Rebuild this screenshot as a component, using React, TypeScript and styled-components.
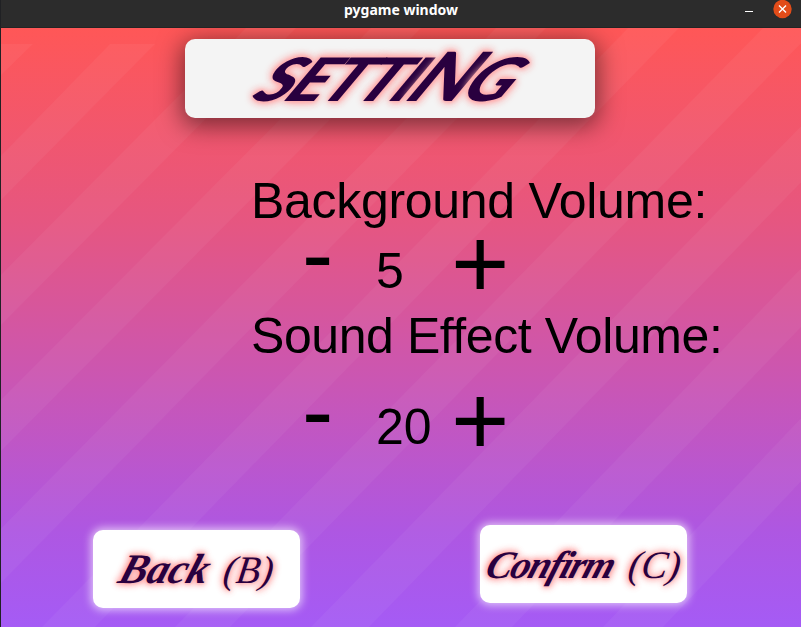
import React from 'react';
import styled, { createGlobalStyle } from 'styled-components';

const GlobalStyle = createGlobalStyle`
  * { box-sizing: border-box; }
  body { margin: 0; overflow: hidden; }
`;

const Window = styled.div`
  display: flex;
  flex-direction: column;
  width: 801px;
  height: 627px;
  overflow: hidden;
  border-left: 1px solid #202124;
`;

const TitleBar = styled.header`
  display: grid;
  grid-template-columns: 1fr auto 1fr;
  align-items: start;
  height: 28px;
  flex: none;
  background: #2c2c2c;
  border-bottom: 1px solid #242424;
`;

const WindowTitle = styled.div`
  grid-column: 2;
  font: 700 14px/20px 'Noto Sans', sans-serif;
  color: #fff;
  white-space: nowrap;
`;

const WindowControls = styled.div`
  display: flex;
  justify-content: flex-end;
  gap: 20px;
  padding-right: 9px;
`;

const ControlIcon = styled.svg`
  display: block;
`;

const Screen = styled.main`
  position: relative;
  flex: 1;
  overflow: hidden;
  background: linear-gradient(180deg, #ff5757 0%, #e65680 32%, #c956b5 60%, #ae57e2 84%, #a55bf5 100%);
`;

const Stripes = styled.svg`
  position: absolute;
  inset: 0;
`;

const Content = styled.div`
  position: relative;
  display: flex;
  flex-direction: column;
  height: 100%;
`;

const Banner = styled.h1`
  display: flex;
  justify-content: center;
  width: 410px;
  height: 79px;
  margin: 11px 0 0 184px;
  border-radius: 10px;
  background: #f4f4f4;
  box-shadow: 0 5px 24px 3px rgba(0, 0, 0, 0.5);
`;

const Lettering = styled.span`
  display: inline-block;
  line-height: 79px;
  white-space: nowrap;
  color: #29003f;
  text-shadow: 0 0 2px #ffb0b0, 0 0 4px #ffa8a8, 0 0 6px #ffa8a8, 0 0 8px #ffb0b0, 0 0 9px #ffb8b8;
`;

const BannerText = styled(Lettering)`
  font: italic 900 60px/79px Lato, sans-serif;
  letter-spacing: -3px;
  transform: translate(3px, -4px) scaleX(1.16) skewX(-31deg);
`;

const TallLetter = styled.span`
  font-size: 68px;
`;

const Script = styled(Lettering)<{ $size: number; $spacing?: number }>`
  font-family: 'Liberation Serif', serif;
  font-style: italic;
  font-weight: 700;
  font-size: ${(p) => p.$size}px;
  letter-spacing: ${(p) => p.$spacing ?? 0}px;
  transform: translateX(2px) skewX(-18deg);
`;

const Shortcut = styled(Lettering)`
  font: italic 400 39px/79px 'Liberation Serif', serif;
  transform: skewX(-8deg);
`;

const Settings = styled.section`
  display: flex;
  flex-direction: column;
  margin-top: 55px;
  padding-left: 250px;
  font-family: 'Liberation Sans', sans-serif;
  color: #000;
`;

const Label = styled.h2<{ $spacing: number }>`
  margin: 0;
  height: 56px;
  font-size: 50px;
  line-height: 56px;
  font-weight: 400;
  letter-spacing: ${(p) => p.$spacing}px;
  white-space: nowrap;
`;

const Stepper = styled.div<{ $top: number }>`
  display: grid;
  grid-template-columns: 74px 75px 64px;
  align-items: start;
  height: 79px;
  margin-top: ${(p) => p.$top}px;
  padding-left: 51px;
`;

const Step = styled.button<{ $size: number; $top: number }>`
  margin: ${(p) => p.$top}px 0 0;
  padding: 0;
  border: 0;
  background: none;
  color: #000;
  text-align: left;
  font: 400 ${(p) => p.$size}px/50px 'Liberation Sans', sans-serif;
`;

const Value = styled.output<{ $top: number }>`
  font-size: 50px;
  line-height: 56px;
  padding-top: ${(p) => p.$top}px;
`;

const Actions = styled.footer`
  display: flex;
  align-items: flex-start;
  gap: 180px;
  margin: auto 0 19px 92px;
`;

const ActionButton = styled.button<{ $drop: number; $gap: number }>`
  display: flex;
  justify-content: center;
  gap: ${(p) => p.$gap}px;
  width: 207px;
  height: 78px;
  margin-top: ${(p) => p.$drop}px;
  padding: 0;
  border: 0;
  border-radius: 10px;
  background: #fff;
  box-shadow: 0 0 8px 2px rgba(255, 255, 255, 0.65);
`;

// Diagonal bands: top edge (left, right, y) followed by bottom edge (left, right, y).
const STRIPES = [
  [-1, 32, 16, -33, 0, 47],
  [109, 154, 16, -44, -1, 173],
  [245, 295, 0, -51, -1, 298],
  [370, 420, 0, -52, -1, 424],
  [495, 545, 0, -55, -1, 556],
  [627, 678, 0, 41, 94, 599],
  [762, 815, 0, 174, 229, 599],
  [896, 950, 0, 310, 368, 599],
  [1032, 1088, 0, 454, 511, 599],
  [1170, 1230, 0, 602, 662, 599],
];

export default function App() {
  return (
    <>
      <GlobalStyle />
      <Window>
        <TitleBar>
          <WindowTitle>pygame window</WindowTitle>
          <WindowControls>
            <ControlIcon width="8" height="20"><path d="M0 11.5h8" stroke="#fff" /></ControlIcon>
            <ControlIcon width="19" height="20">
              <circle cx="9.5" cy="9" r="9.2" fill="#e24c19" />
              <path d="M6 5.5l7 7m0-7l-7 7" stroke="#fff" strokeWidth="1.4" />
            </ControlIcon>
          </WindowControls>
        </TitleBar>
        <Screen>
          <Stripes width="800" height="599">
            {STRIPES.map(([tl, tr, ty, bl, br, by]) => (
              <polygon key={tl} fill="#fff" fillOpacity="0.045"
                points={`${tl},${ty} ${tr},${ty} ${br},${by} ${bl},${by}`} />
            ))}
          </Stripes>
          <Content>
            <Banner><BannerText>SETTI<TallLetter>N</TallLetter>G</BannerText></Banner>
            <Settings>
              <Label $spacing={-0.3}>Background Volume:</Label>
              <Stepper $top={0}>
                <Step $size={94} $top={0}>-</Step><Value $top={14}>5</Value><Step $size={100} $top={9}>+</Step>
              </Stepper>
              <Label $spacing={-0.43}>Sound Effect Volume:</Label>
              <Stepper $top={22}>
                <Step $size={94} $top={0}>-</Step><Value $top={13}>20</Value><Step $size={100} $top={9}>+</Step>
              </Stepper>
            </Settings>
            <Actions>
              <ActionButton $drop={5} $gap={16}>
                <Script $size={42}>Back</Script>
                <Shortcut>(B)</Shortcut>
              </ActionButton>
              <ActionButton $drop={0} $gap={17}>
                <Script $size={39} $spacing={-1.5}>Confirm</Script>
                <Shortcut>(C)</Shortcut>
              </ActionButton>
            </Actions>
          </Content>
        </Screen>
      </Window>
    </>
  );
}
